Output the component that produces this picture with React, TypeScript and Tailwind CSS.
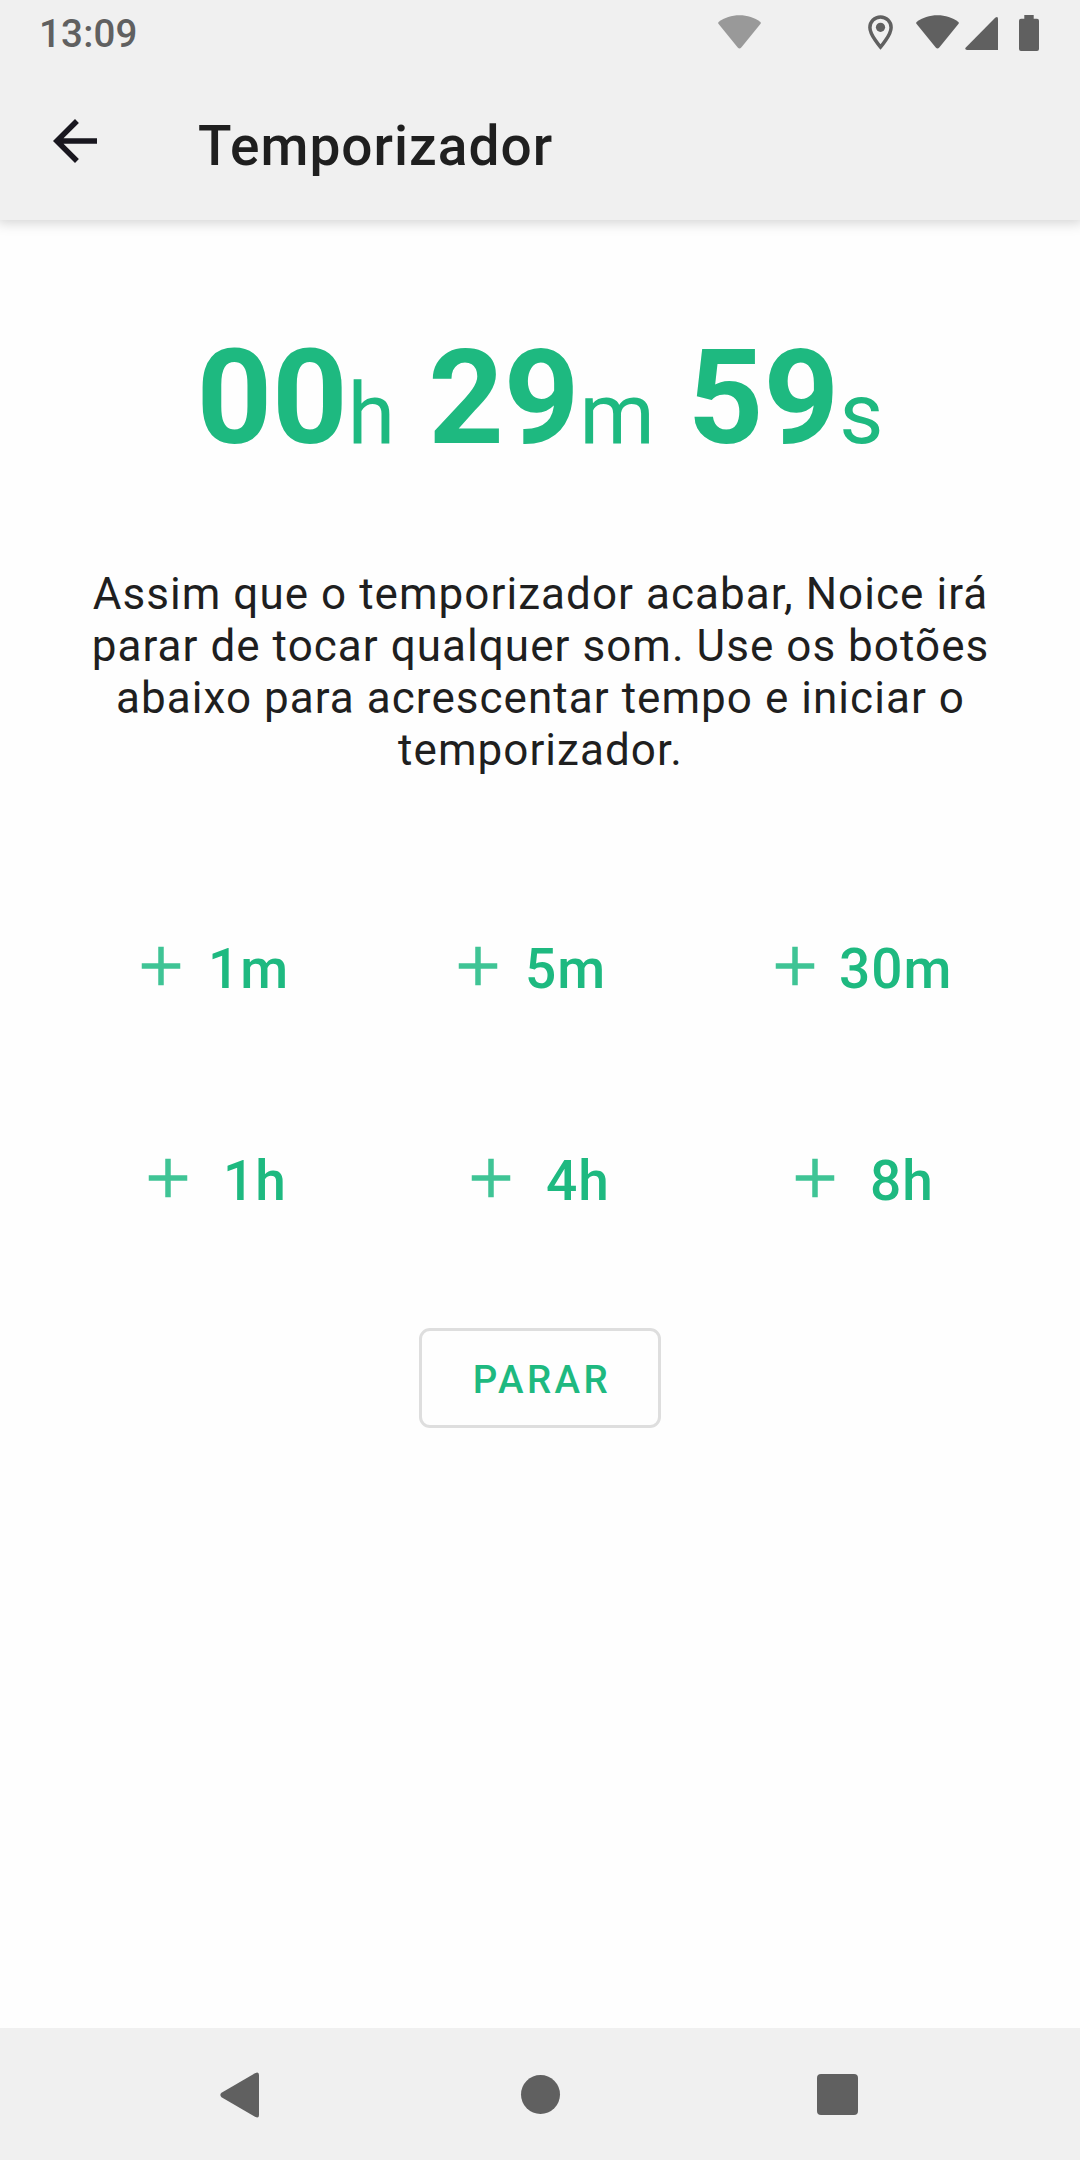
import React from "react";

const WIFI_PATH =
  "M21.25 0.3C29 0.3 36.3 2.9 41.6 6.6Q42.9 7.6 41.9 9L23 32.2Q21.3 34 19.5 32.2L0.6 9Q-0.4 7.6 0.9 6.6C6.2 2.9 13.5 0.3 21.25 0.3Z";

function Wifi({ className }: { className: string }) {
  return (
    <svg className={className} width="43" height="34" viewBox="0 0 42.5 33.6" fill="currentColor">
      <path d={WIFI_PATH} />
    </svg>
  );
}

function StatusBar() {
  return (
    <div className="flex h-[66px] items-start text-[#606060]">
      <span className="ml-[39px] mt-[11px] w-[120px] text-[38.5px] leading-[46px] font-medium tracking-[0.2px]">13:09</span>
      <Wifi className="ml-[559px] mt-[15px] text-[#999999]" />
      <svg className="ml-[107px] mt-[15px]" width="25" height="35" viewBox="0 0 25 35" fill="none">
        <path
          d="M12.5 1.9C6.6 1.9 1.9 6.5 1.9 12.4C1.9 20 12.5 32 12.5 32S23.1 20 23.1 12.4C23.1 6.5 18.4 1.9 12.5 1.9Z"
          stroke="currentColor"
          strokeWidth="3.5"
        />
        <circle cx="12.5" cy="12.3" r="4.6" fill="currentColor" />
      </svg>
      <Wifi className="ml-[23px] mt-[15px]" />
      <svg className="ml-[6px] mt-[16px]" width="33" height="34" viewBox="0 0 33 34" fill="currentColor">
        <path d="M30.2 1.7Q33 0 33 2.7V34H2Q-0.5 33.5 0.6 31.8Z" />
      </svg>
      <svg className="ml-[21px] mt-[15px]" width="20" height="36" viewBox="0 0 20 36" fill="currentColor">
        <path d="M5.3 0H14.7V3.7H18Q20 3.7 20 5.7V34Q20 36 18 36H2Q0 36 0 34V5.7Q0 3.7 2 3.7H5.3Z" />
      </svg>
    </div>
  );
}

function AppBar() {
  return (
    <div className="flex h-[154px] items-center text-[#1f1f1f]">
      <svg className="mb-[4px] ml-[42px] shrink-0 text-[#19171f]" width="66" height="66" viewBox="0 0 24 24" fill="currentColor">
        <path d="M20 11H7.83l5.59-5.59L12 4l-8 8 8 8 1.41-1.41L7.83 13H20v-2z" />
      </svg>
      <h1 className="ml-[90px] mt-[5px] text-[55px] leading-[66px] font-medium tracking-[1.03px]">Temporizador</h1>
    </div>
  );
}

function Unit({ value, unit }: { value: string; unit: string }) {
  return (
    <span>
      <span className="font-bold">{value}</span>
      <span className="text-[85.8px]">{unit}</span>
    </span>
  );
}

function AddButton({ label, gap }: { label: string; gap: string }) {
  return (
    <button className="flex h-[72px] items-center text-[55px] leading-[66px] font-medium tracking-[1px] whitespace-nowrap">
      <svg className="shrink-0" width="66" height="66" viewBox="0 0 24 24" fill="#3fc495">
        <path d="M19 13h-6v6h-2v-6H5v-2h6V5h2v6h6v2z" />
      </svg>
      <span className={gap}>{label}</span>
    </button>
  );
}

export default function App() {
  return (
    <div className="flex h-[2160px] w-[1080px] flex-col overflow-hidden bg-[#fefefe] font-['Roboto',sans-serif]">
      <header className="z-10 shrink-0 bg-[#f0f0f0] shadow-[0_0px_12px_3px_rgba(0,0,0,0.17)]">
        <StatusBar />
        <AppBar />
      </header>
      <main className="flex flex-1 flex-col items-center text-[#1eb980]">
        <div className="mt-[101px] flex h-[155px] items-baseline gap-[33px] text-[132px] leading-[155px]">
          <Unit value="00" unit="h" />
          <Unit value="29" unit="m" />
          <Unit value="59" unit="s" />
        </div>
        <p className="mt-[92px] pl-px text-center text-[44px] leading-[52px] tracking-[1.045px] text-[#1f1f1f]">
          Assim que o temporizador acabar, Noice irá
          <br />
          parar de tocar qualquer som. Use os botões
          <br />
          abaixo para acrescentar tempo e iniciar o
          <br />
          temporizador.
        </p>
        <div className="mt-[154px] grid w-full grid-cols-[317px_317px_1fr] pl-[128px]">
          <AddButton label="1m" gap="ml-[14px] pt-[6px]" />
          <AddButton label="5m" gap="ml-[14px] pt-[6px]" />
          <AddButton label="30m" gap="ml-[11px] pt-[6px]" />
        </div>
        <div className="mt-[140px] grid w-full grid-cols-[323px_324px_1fr] pl-[135px]">
          <AddButton label="1h" gap="ml-[22px] pt-[6px]" />
          <AddButton label="4h" gap="ml-[22px] pt-[6px]" />
          <AddButton label="8h" gap="ml-[22px] pt-[6px]" />
        </div>
        <button className="mt-[114px] h-[100px] w-[242px] rounded-[11px] border-[3px] border-[#dedede] pt-[3px] pl-[4px] text-[38.5px] leading-[46px] font-medium tracking-[3.44px]">
          PARAR
        </button>
      </main>
      <nav className="flex h-[132px] shrink-0 items-center bg-[#f0f0f0] text-[#606060]">
        <svg className="mt-px ml-[220px]" width="39" height="46" viewBox="0 0 39 46" fill="currentColor">
          <path d="M35 1.2Q39 -1 39 3V43Q39 47 35 44.8L1.5 25.2Q-0.8 23 1.5 20.8Z" />
        </svg>
        <div className="ml-[262px] size-[39px] rounded-full bg-current" />
        <div className="ml-[257px] size-[41px] rounded-[4px] bg-current" />
      </nav>
    </div>
  );
}
